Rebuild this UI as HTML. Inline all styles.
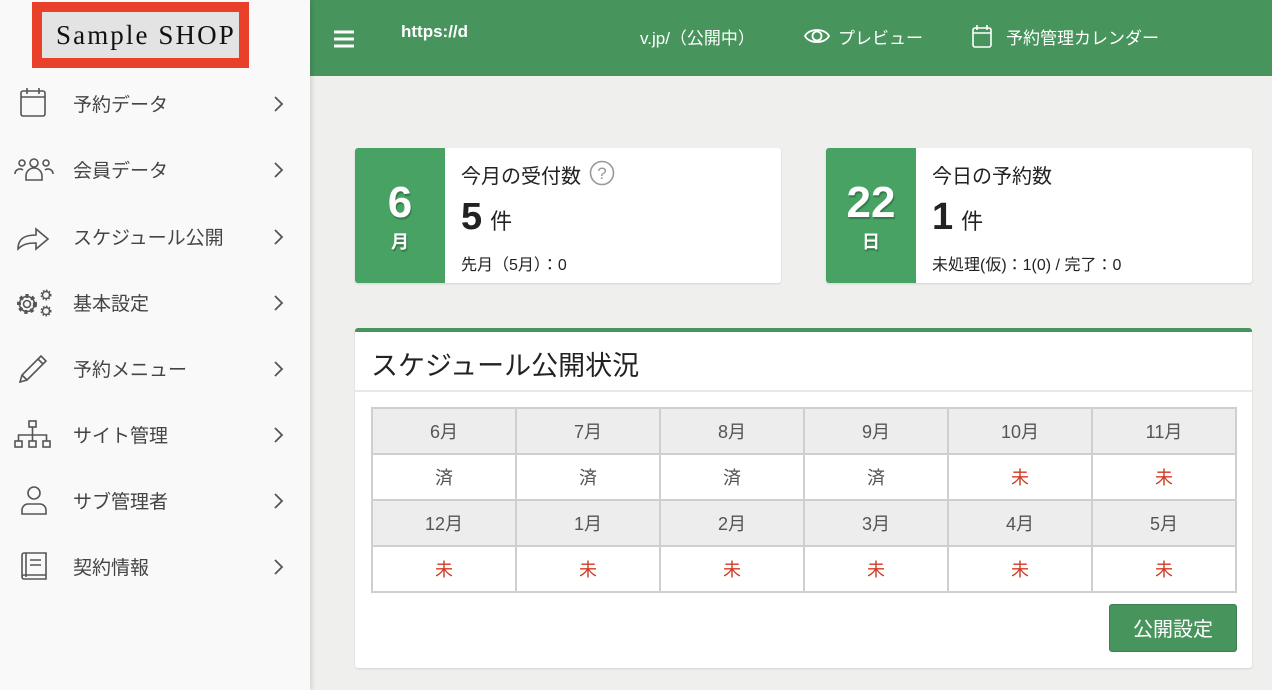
<!DOCTYPE html>
<html><head><meta charset="utf-8"><style>
*{margin:0;padding:0;box-sizing:border-box}
body{width:1272px;height:690px;overflow:hidden;background:#eff0ee;font-family:"Liberation Sans","Noto Sans CJK JP",sans-serif;position:relative;color:#333}
.side{position:absolute;left:0;top:0;width:310px;height:690px;background:#f9f9f9;box-shadow:2px 0 4px rgba(0,0,0,.12);z-index:2}
.logo{position:absolute;left:32px;top:2px;width:217px;height:66px;border:10px solid #e8402a;background:#fff}
.logo div{position:absolute;left:0;top:0;width:197px;height:46px;background:#e3e3e3;font-family:"Liberation Serif",serif;font-size:27px;letter-spacing:2.1px;color:#111;line-height:46px;padding-left:14px;white-space:nowrap;overflow:hidden}
.item{position:absolute;left:0;width:310px;height:40px}
.item svg.ic{position:absolute;left:14px;top:5px}
.item span{position:absolute;left:73px;top:7px;font-size:19px;color:#444}
.item svg.ar{position:absolute;left:272px;top:12px}
.head{position:absolute;left:310px;top:0;width:962px;height:76px;background:#47945c;color:#fff;font-size:17px}
.head span{position:absolute;top:24px}
.card{position:absolute;top:148px;width:426px;height:135px;background:#fff;border-radius:3px;box-shadow:0 1px 2px rgba(0,0,0,.12)}
.card .g{position:absolute;left:0;top:0;width:90px;height:135px;background:#47a263;border-radius:3px 0 0 3px;color:#fff;text-align:center;text-shadow:1px 2px 1px rgba(0,0,0,.25)}
.g .n{position:absolute;left:0;width:90px;top:30px;font-size:44px;font-weight:bold;line-height:50px}
.g .u{position:absolute;left:0;width:90px;top:80px;font-size:18px;font-weight:bold}
.card .t{position:absolute;left:106px;top:12px;font-size:20px;color:#222}
.card .b{position:absolute;left:106px;top:48px;font-size:38px;font-weight:bold;color:#222}
.card .b small{font-size:22px;font-weight:normal;margin-left:8px}
.card .s{position:absolute;left:106px;top:103px;font-size:16px;color:#222}
.panel{position:absolute;left:355px;top:328px;width:897px;height:340px;background:#fff;border-top:4px solid #47945c;border-radius:3px;box-shadow:0 1px 2px rgba(0,0,0,.12)}
.panel h2{position:absolute;left:16px;top:12px;font-size:27px;font-weight:normal;color:#222}
.panel .hr{position:absolute;left:0;top:58px;width:897px;height:2px;background:#e8e8e8}
table{position:absolute;left:16px;top:75px;width:866px;border-collapse:collapse}
td{border:2px solid #cfcfcf;height:46px;text-align:center;font-size:18px;color:#555;width:144px}
tr.h td{background:#ededed}
td.r{color:#d03a22}
.btn{position:absolute;left:754px;top:272px;width:128px;height:48px;background:#47945c;border:1px solid #3d8150;border-radius:3px;color:#fff;font-size:20px;text-align:center;line-height:50px}
</style></head><body>
<div class="side">
<div class="logo"><div>Sample SHOP</div></div>
<div class="item" style="top:83px"><svg class="ic" width="40" height="30" viewBox="0 0 40 30" fill="none" stroke="#555" stroke-width="1.6"><rect x="7" y="3" width="24" height="25" rx="2"/><path d="M7 9h24M13 0v6M25 0v6"/></svg><span>予約データ</span><svg class="ar" width="12" height="18" viewBox="0 0 12 18"><path d="M3 2l7 7-7 7" fill="none" stroke="#555" stroke-width="1.8"/></svg></div>
<div class="item" style="top:149px"><svg class="ic" width="40" height="30" viewBox="0 0 40 30" fill="none" stroke="#555" stroke-width="1.6"><circle cx="20" cy="9" r="4"/><circle cx="8" cy="9" r="3"/><circle cx="32" cy="9" r="3"/><path d="M12 26v-4a6 6 0 0 1 16 0v4zM1 20a5 5 0 0 1 8-4M39 20a5 5 0 0 0-8-4"/></svg><span>会員データ</span><svg class="ar" width="12" height="18" viewBox="0 0 12 18"><path d="M3 2l7 7-7 7" fill="none" stroke="#555" stroke-width="1.8"/></svg></div>
<div class="item" style="top:216px"><svg class="ic" width="40" height="30" viewBox="0 0 40 30" fill="none" stroke="#555" stroke-width="1.6"><path d="M4 28c0-10 6-14 18-14v-6l12 10-12 10v-6c-8 0-13 1-18 6z"/></svg><span>スケジュール公開</span><svg class="ar" width="12" height="18" viewBox="0 0 12 18"><path d="M3 2l7 7-7 7" fill="none" stroke="#555" stroke-width="1.8"/></svg></div>
<div class="item" style="top:282px"><svg class="ic" width="40" height="30" viewBox="0 0 40 30" fill="none" stroke="#555" stroke-width="1.6"><circle cx="13" cy="17" r="8" stroke-width="4" stroke-dasharray="3 3"/><circle cx="13" cy="17" r="7.5"/><circle cx="13" cy="17" r="3.5"/><circle cx="32" cy="8" r="3.5" stroke-width="1.4"/><circle cx="32" cy="8" r="4.5" stroke-width="2" stroke-dasharray="1.5 1.5"/><circle cx="32" cy="24" r="3.5" stroke-width="1.4"/><circle cx="32" cy="24" r="4.5" stroke-width="2" stroke-dasharray="1.5 1.5"/></svg><span>基本設定</span><svg class="ar" width="12" height="18" viewBox="0 0 12 18"><path d="M3 2l7 7-7 7" fill="none" stroke="#555" stroke-width="1.8"/></svg></div>
<div class="item" style="top:348px"><svg class="ic" width="40" height="30" viewBox="0 0 40 30" fill="none" stroke="#555" stroke-width="1.6"><path d="M6 29l2-7L27 3l5 5-19 19zM8 22l5 5M24 6l5 5"/></svg><span>予約メニュー</span><svg class="ar" width="12" height="18" viewBox="0 0 12 18"><path d="M3 2l7 7-7 7" fill="none" stroke="#555" stroke-width="1.8"/></svg></div>
<div class="item" style="top:414px"><svg class="ic" width="40" height="30" viewBox="0 0 40 30" fill="none" stroke="#555" stroke-width="1.6"><rect x="15" y="2" width="7" height="6"/><rect x="1" y="22" width="7" height="6"/><rect x="15" y="22" width="7" height="6"/><rect x="29" y="22" width="7" height="6"/><path d="M18.5 8v14M4.5 22v-6h28v6"/></svg><span>サイト管理</span><svg class="ar" width="12" height="18" viewBox="0 0 12 18"><path d="M3 2l7 7-7 7" fill="none" stroke="#555" stroke-width="1.8"/></svg></div>
<div class="item" style="top:480px"><svg class="ic" width="40" height="30" viewBox="0 0 40 30" fill="none" stroke="#555" stroke-width="1.6"><circle cx="20" cy="8" r="6"/><path d="M8 29v-4a6 6 0 0 1 6-6h12a6 6 0 0 1 6 6v4z"/></svg><span>サブ管理者</span><svg class="ar" width="12" height="18" viewBox="0 0 12 18"><path d="M3 2l7 7-7 7" fill="none" stroke="#555" stroke-width="1.8"/></svg></div>
<div class="item" style="top:546px"><svg class="ic" width="40" height="30" viewBox="0 0 40 30" fill="none" stroke="#555" stroke-width="1.6"><path d="M8 26V4a2 2 0 0 1 2-2h22v26H10a2 2 0 0 1-2-2a2 2 0 0 1 2-2h22M12 2v24M16 9h11M16 14h11"/></svg><span>契約情報</span><svg class="ar" width="12" height="18" viewBox="0 0 12 18"><path d="M3 2l7 7-7 7" fill="none" stroke="#555" stroke-width="1.8"/></svg></div>
</div>
<div class="head">
<svg style="position:absolute;left:24px;top:30px" width="20" height="18" viewBox="0 0 20 18"><path d="M0 2h20M0 9h20M0 16h20" stroke="#fff" stroke-width="3"/></svg>
<span style="left:91px;font-weight:bold;top:22px">https://d</span>
<span style="left:330px">v.jp/（公開中）</span>
<svg style="position:absolute;left:494px;top:25px" width="26" height="22" viewBox="0 0 26 22" fill="none" stroke="#fff" stroke-width="1.8"><path d="M1 11C5 3 21 3 25 11C21 19 5 19 1 11z"/><circle cx="13" cy="11" r="4.5"/></svg>
<span style="left:528px">プレビュー</span>
<svg style="position:absolute;left:662px;top:24px" width="20" height="24" viewBox="0 0 20 24" fill="none" stroke="#fff" stroke-width="1.6"><rect x="1" y="4" width="18" height="19" rx="2"/><path d="M1 9h18M5 1v5M15 1v5"/></svg>
<span style="left:696px">予約管理カレンダー</span>
</div>
<div class="card" style="left:355px"><div class="g"><div class="n">6</div><div class="u">月</div></div>
<div class="t">今月の受付数 <svg style="vertical-align:-3px;margin-left:2px" width="26" height="26" viewBox="0 0 26 26"><circle cx="13" cy="13" r="11.5" fill="none" stroke="#999" stroke-width="1.6"/><text x="13" y="19" text-anchor="middle" font-size="17" fill="#999" font-family="Liberation Sans">?</text></svg></div>
<div class="b">5<small>件</small></div><div class="s">先月（5月）：0</div></div>
<div class="card" style="left:826px"><div class="g"><div class="n">22</div><div class="u">日</div></div>
<div class="t">今日の予約数</div>
<div class="b">1<small>件</small></div><div class="s">未処理(仮)：1(0) / 完了：0</div></div>
<div class="panel"><h2>スケジュール公開状況</h2><div class="hr"></div>
<table>
<tr class="h"><td>6月</td><td>7月</td><td>8月</td><td>9月</td><td>10月</td><td>11月</td></tr>
<tr><td>済</td><td>済</td><td>済</td><td>済</td><td class="r">未</td><td class="r">未</td></tr>
<tr class="h"><td>12月</td><td>1月</td><td>2月</td><td>3月</td><td>4月</td><td>5月</td></tr>
<tr><td class="r">未</td><td class="r">未</td><td class="r">未</td><td class="r">未</td><td class="r">未</td><td class="r">未</td></tr>
</table>
<div class="btn">公開設定</div>
</div>
</body></html>
